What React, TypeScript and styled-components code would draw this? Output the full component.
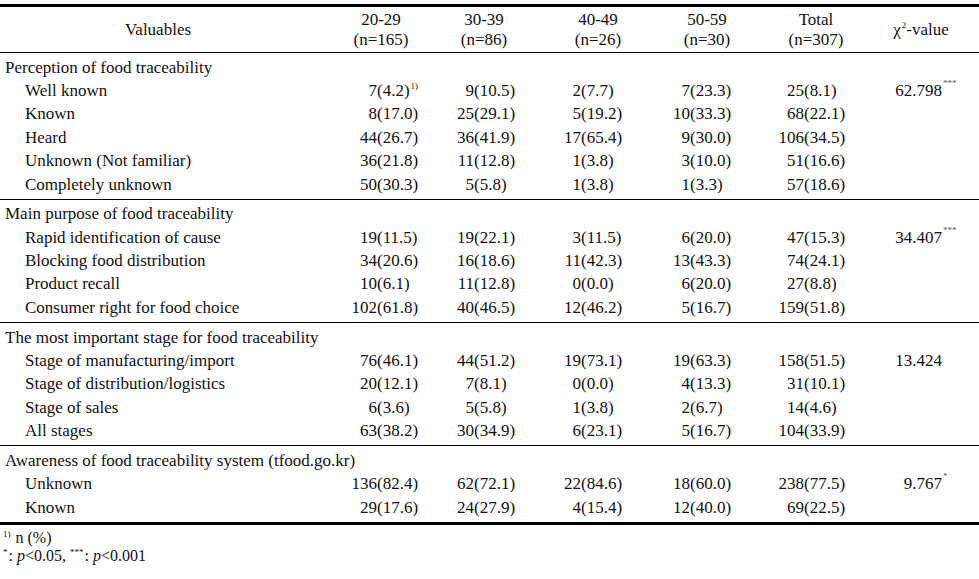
import React from 'react'
import styled, { createGlobalStyle } from 'styled-components'

const GlobalStyle = createGlobalStyle`
  html, body {
    margin: 0;
    padding: 0;
    background: #fff;
  }
  body {
    font-family: "Liberation Serif", "Times New Roman", serif;
    color: #111;
  }
`

const COLUMNS = '330px 102px 104px 124px 94px 124px 86px 15px'
// where the "(" sits inside each age / total column
const ANCHORS = [47, 42, 45, 30, 50]

type Group = {
  title: string
  chi: string
  sig: string
  rows: { label: string; cells: string[]; note?: string }[]
}

const groups: Group[] = [
  {
    title: 'Perception of food traceability',
    chi: '62.798',
    sig: '***',
    rows: [
      { label: 'Well known', cells: ['7(4.2)', '9(10.5)', '2(7.7)', '7(23.3)', '25(8.1)'], note: '1)' },
      { label: 'Known', cells: ['8(17.0)', '25(29.1)', '5(19.2)', '10(33.3)', '68(22.1)'] },
      { label: 'Heard', cells: ['44(26.7)', '36(41.9)', '17(65.4)', '9(30.0)', '106(34.5)'] },
      { label: 'Unknown (Not familiar)', cells: ['36(21.8)', '11(12.8)', '1(3.8)', '3(10.0)', '51(16.6)'] },
      { label: 'Completely unknown', cells: ['50(30.3)', '5(5.8)', '1(3.8)', '1(3.3)', '57(18.6)'] },
    ],
  },
  {
    title: 'Main purpose of food traceability',
    chi: '34.407',
    sig: '***',
    rows: [
      { label: 'Rapid identification of cause', cells: ['19(11.5)', '19(22.1)', '3(11.5)', '6(20.0)', '47(15.3)'] },
      { label: 'Blocking food distribution', cells: ['34(20.6)', '16(18.6)', '11(42.3)', '13(43.3)', '74(24.1)'] },
      { label: 'Product recall', cells: ['10(6.1)', '11(12.8)', '0(0.0)', '6(20.0)', '27(8.8)'] },
      { label: 'Consumer right for food choice', cells: ['102(61.8)', '40(46.5)', '12(46.2)', '5(16.7)', '159(51.8)'] },
    ],
  },
  {
    title: 'The most important stage for food traceability',
    chi: '13.424',
    sig: '',
    rows: [
      { label: 'Stage of manufacturing/import', cells: ['76(46.1)', '44(51.2)', '19(73.1)', '19(63.3)', '158(51.5)'] },
      { label: 'Stage of distribution/logistics', cells: ['20(12.1)', '7(8.1)', '0(0.0)', '4(13.3)', '31(10.1)'] },
      { label: 'Stage of sales', cells: ['6(3.6)', '5(5.8)', '1(3.8)', '2(6.7)', '14(4.6)'] },
      { label: 'All stages', cells: ['63(38.2)', '30(34.9)', '6(23.1)', '5(16.7)', '104(33.9)'] },
    ],
  },
  {
    title: 'Awareness of food traceability system (tfood.go.kr)',
    chi: '9.767',
    sig: '*',
    rows: [
      { label: 'Unknown', cells: ['136(82.4)', '62(72.1)', '22(84.6)', '18(60.0)', '238(77.5)'] },
      { label: 'Known', cells: ['29(17.6)', '24(27.9)', '4(15.4)', '12(40.0)', '69(22.5)'] },
    ],
  },
]

const headers = [
  ['20-29', '(n=165)'],
  ['30-39', '(n=86)'],
  ['40-49', '(n=26)'],
  ['50-59', '(n=30)'],
  ['Total', '(n=307)'],
]

const Page = styled.div`
  width: 979px;
  padding-top: 4px;
`

const Table = styled.div`
  border-top: 3px solid #000;
  border-bottom: 3px solid #000;
  font-size: 17px;
`

const HeadRow = styled.div`
  display: grid;
  grid-template-columns: ${COLUMNS};
  height: 45px;
  align-items: center;
  border-bottom: 1px solid #000;
  line-height: 20px;
`

const HeadCell = styled.div<{ $pad?: number }>`
  text-align: center;
  padding-right: ${(p) => p.$pad || 0}px;
`

const Section = styled.div<{ $last?: boolean }>`
  padding: 2.8px 0;
  border-bottom: ${(p) => (p.$last ? 'none' : '1px solid #000')};
`

const Row = styled.div`
  display: grid;
  grid-template-columns: ${COLUMNS};
  height: 23.35px;
  line-height: 23.35px;
  white-space: nowrap;
`

const Label = styled.div<{ $indent?: boolean }>`
  padding-left: ${(p) => (p.$indent ? 25 : 5)}px;
`

const Cell = styled.div`
  display: flex;
`

const Lead = styled.span<{ $w: number }>`
  width: ${(p) => p.$w}px;
  text-align: right;
  flex: none;
`

const ChiCell = styled.div`
  position: relative;
  text-align: right;
  padding-right: 22px;
`

const Sig = styled.span`
  position: absolute;
  left: calc(100% - 22px);
  top: -7px;
  font-size: 9px;
  color: #555;
  padding-left: 1px;
`

const Note = styled.sup`
  font-size: 9px;
  line-height: 0;
  vertical-align: 7px;
  margin-left: 1px;
`

const Footnotes = styled.div`
  padding: 4px 0 0 3px;
  font-size: 16px;
  line-height: 18px;
`

const FootSup = styled.sup`
  font-size: 9px;
  line-height: 0;
  vertical-align: 6px;
  margin-right: 1px;
`

const DataCell = ({ value, anchor, note }: { value: string; anchor: number; note?: string }) => {
  const i = value.indexOf('(')
  return (
    <Cell>
      <Lead $w={anchor}>{value.slice(0, i)}</Lead>
      <span>
        {value.slice(i)}
        {note && <Note>{note}</Note>}
      </span>
    </Cell>
  )
}

const App = (): JSX.Element => (
  <Page>
    <GlobalStyle />
    <Table>
      <HeadRow>
        <HeadCell $pad={14}>Valuables</HeadCell>
        {headers.map(([a, b]) => (
          <HeadCell key={a}>
            {a}
            <br />
            {b}
          </HeadCell>
        ))}
        <HeadCell>
          χ<Note>2</Note>-value
        </HeadCell>
      </HeadRow>
      {groups.map((g, gi) => (
        <Section key={g.title} $last={gi === groups.length - 1}>
          <Row>
            <Label>{g.title}</Label>
          </Row>
          {g.rows.map((r, ri) => (
            <Row key={r.label}>
              <Label $indent>{r.label}</Label>
              {r.cells.map((c, ci) => (
                <DataCell key={ci} value={c} anchor={ANCHORS[ci]} note={ci === 0 ? r.note : undefined} />
              ))}
              <ChiCell>
                {ri === 0 && (
                  <>
                    {g.chi}
                    {g.sig && <Sig>{g.sig}</Sig>}
                  </>
                )}
              </ChiCell>
            </Row>
          ))}
        </Section>
      ))}
    </Table>
    <Footnotes>
      <div>
        <FootSup>1)</FootSup> n (%)
      </div>
      <div>
        <FootSup>*</FootSup>: <i>p</i>&lt;0.05, <FootSup>***</FootSup>: <i>p</i>&lt;0.001
      </div>
    </Footnotes>
  </Page>
)

export default App
